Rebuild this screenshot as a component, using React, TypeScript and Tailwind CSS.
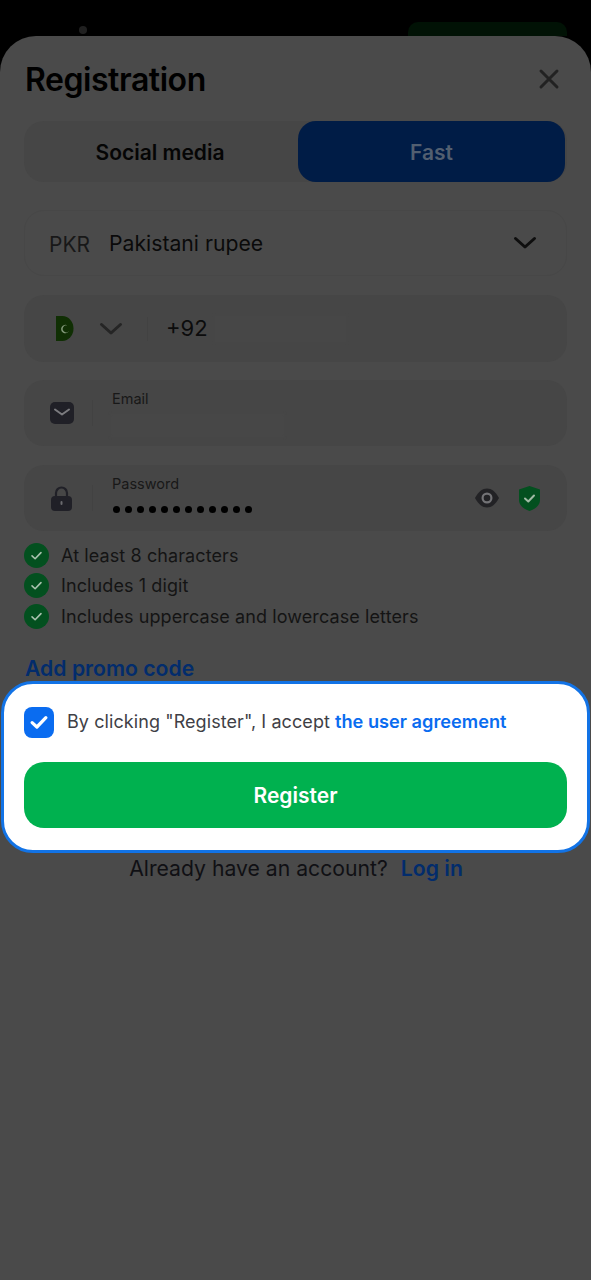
import React from "react";

const Check = ({ s = 12, w = 2, c = "#a9c2ae" }: { s?: number; w?: number; c?: string }) => (
  <svg width={s} height={s} viewBox="0 0 16 16" fill="none">
    <path d="M2.5 8.5 6.3 12 13.5 4.5" stroke={c} strokeWidth={w} strokeLinecap="round" strokeLinejoin="round" />
  </svg>
);

const Chevron = ({ c = "#2e2e2e" }: { c?: string }) => (
  <svg width="24" height="14" viewBox="0 0 24 14" fill="none">
    <path d="M2.5 2.5 12 11 21.5 2.5" stroke={c} strokeWidth="3" strokeLinecap="round" strokeLinejoin="round" />
  </svg>
);

const Rule = ({ text }: { text: string }) => (
  <div className="flex h-[30.5px] items-center gap-[12px]">
    <span className="flex h-[25px] w-[25px] items-center justify-center rounded-full bg-[#03501f]">
      <Check s={13} w={2} />
    </span>
    <span className="text-[18px] text-[#141414] tracking-[0.1px]">{text}</span>
  </div>
);

export default function App() {
  return (
    <div className="relative h-[1280px] w-[591px] overflow-hidden bg-[#4a4a4a] font-['Inter',sans-serif]">
      <div className="relative h-[36px] bg-black">
        <span className="absolute left-[79px] top-[26px] h-[8px] w-[8px] rounded-full bg-[#202020]" />
        <span className="absolute left-[408px] top-[22px] h-[20px] w-[159px] rounded-t-[10px] bg-[#011205]" />
      </div>
      <div className="relative">
        <div className="absolute left-0 top-0 h-[36px] w-[36px] bg-black" />
        <div className="absolute right-0 top-0 h-[36px] w-[36px] bg-black" />
        <div className="relative rounded-t-[36px] bg-[#4a4a4a]">
          <div className="flex h-[85px] items-center justify-between pl-[25px] pr-[30px] pt-[3px]">
            <h1 className="text-[32px] font-semibold leading-none tracking-[-0.45px] text-[#000000]">Registration</h1>
            <svg width="24" height="24" viewBox="0 0 24 24" fill="none" className="mb-[3px]">
              <path d="M4 4 20 20M20 4 4 20" stroke="#222222" strokeWidth="3" strokeLinecap="round" />
            </svg>
          </div>

          <div className="mx-[24px] flex h-[61px] rounded-[20px] bg-[#464646]">
            <div className="flex w-[272px] items-center justify-center pt-[3px] text-[21px] font-semibold text-[#050505]">Social media</div>
            <div className="ml-[2px] flex w-[267px] items-center justify-center rounded-[18px] bg-[#001c46] pt-[3px] text-[21px] font-semibold text-[#525f70]">Fast</div>
          </div>

          <div className="mx-[24px] mt-[28px] flex h-[66px] items-center rounded-[20px] border border-[#474747] pl-[24px] pr-[29px]">
            <span className="pt-[3px] text-[21px] text-[#181818]">PKR</span>
            <span className="ml-[19px] flex-1 pt-[2px] text-[21.2px] text-[#0a0a0a]">Pakistani rupee</span>
            <Chevron c="#0e0e0e" />
          </div>

          <div className="mx-[24px] mt-[19px] flex h-[67px] items-center rounded-[20px] bg-[#464646] pl-[32px]">
            <svg width="18" height="25" viewBox="0 0 18 25">
              <path d="M0 0H6.5A11 12.5 0 0 1 6.5 25H0Z" fill="#102f04" />
              <path d="M11.5 9.5A4.2 4.2 0 1 0 13 15A3.5 3.5 0 1 1 11.5 9.5Z" fill="#7f9676" />
            </svg>
            <span className="ml-[25px]"><Chevron c="#252525" /></span>
            <span className="ml-[24px] h-[24px] w-px bg-[#424242]" />
            <span className="ml-[18px] text-[22px] text-[#0c0c0c]">+92</span>
            <span className="ml-[6px] h-[28px] w-[133px] bg-[#474747] blur-[1px]" />
          </div>

          <div className="mx-[24px] mt-[18px] flex h-[66px] items-center rounded-[20px] bg-[#464646] pl-[26px]">
            <svg width="24" height="22" viewBox="0 0 24 22" fill="none">
              <rect width="24" height="22" rx="5" fill="#202027" />
              <path d="M5 7.5 12 12.5 19 7.5" stroke="#7a7a7e" strokeWidth="2" strokeLinecap="round" strokeLinejoin="round" />
            </svg>
            <span className="ml-[18px] h-[26px] w-px bg-[#424242]" />
            <div className="ml-[19px] self-start pt-[10px]">
              <div className="text-[14.5px] leading-[18px] text-[#181818]">Email</div>
              <div className="-ml-[2px] mt-[5px] h-[25px] w-[175px] rounded-[3px] bg-[#474747] blur-[1px]" />
            </div>
          </div>

          <div className="mx-[24px] mt-[19px] flex h-[66px] items-center rounded-[20px] bg-[#464646] pl-[27px] pr-[27px]">
            <svg width="21" height="25" viewBox="0 0 21 25" fill="none">
              <path d="M5 11V7a5.5 5.5 0 0 1 11 0v4" stroke="#202027" strokeWidth="2.2" />
              <rect y="10" width="21" height="15" rx="4" fill="#202027" />
              <rect x="9.5" y="15" width="2" height="4" rx="1" fill="#6a6a6e" />
            </svg>
            <span className="ml-[20px] h-[26px] w-px bg-[#424242]" />
            <div className="ml-[19px] flex-1 self-start pt-[10px]">
              <div className="text-[14.5px] leading-[18px] text-[#181818]">Password</div>
              <div className="ml-[1px] mt-[13px] flex gap-[5px]">
                {Array.from({ length: 12 }).map((_, i) => (
                  <span key={i} className="h-[7px] w-[7px] rounded-full bg-[#000000]" />
                ))}
              </div>
            </div>
            <svg width="24" height="20" viewBox="0 0 24 20" fill="none">
              <path d="M0 10C3.5 3.5 7.5 0.5 12 0.5S20.5 3.5 24 10C20.5 16.5 16.5 19.5 12 19.5S3.5 16.5 0 10Z" fill="#222225" />
              <circle cx="12" cy="10" r="4.4" stroke="#737376" strokeWidth="2.2" />
            </svg>
            <svg width="21" height="25" viewBox="0 0 21 25" className="ml-[20px]">
              <path d="M10.5 0 21 3.5V14C21 19.5 15.500 23.500 10.500 25 5.500 23.500 0 19.500 0 14V3.500Z" fill="#03501f" />
              <path d="M6 12.500 9.300 15.500 15 9.500" fill="none" stroke="#a0baa5" strokeWidth="2" strokeLinecap="round" strokeLinejoin="round" />
            </svg>
          </div>

          <div className="mx-[24px] mt-[9px]">
            <Rule text="At least 8 characters" />
            <Rule text="Includes 1 digit" />
            <Rule text="Includes uppercase and lowercase letters" />
          </div>

          <div className="ml-[25px] mt-[23px] text-[21.2px] font-semibold leading-[26px] text-[#022c6c]">Add promo code</div>

          <div className="mx-px h-[172px] rounded-[32px] border-[3px] border-[#1273e6] bg-white px-[20px] pt-[23px]">
            <div className="flex items-center">
              <span className="flex h-[31px] w-[30px] items-center justify-center rounded-[8px] bg-[#0a6cf0]">
                <Check s={20} w={2.6} c="#ffffff" />
              </span>
              <span className="ml-[13px] pb-[2px] text-[18px] tracking-[0.08px] text-[#3f3f46]">By clicking "Register", I accept</span>
              <span className="ml-[5px] pb-[1px] text-[18.2px] font-semibold text-[#0a6cf0]">the user agreement</span>
            </div>
            <div className="mt-[24px] flex h-[66px] items-center justify-center rounded-[20px] bg-[#00b14f] pt-[2px] text-[21px] font-semibold text-white">Register</div>
          </div>

          <div className="mt-[1px] flex h-[30px] items-center justify-center pl-[1px] text-[21.2px] text-[#101014]">
            <span>Already have an account?</span>
            <span className="ml-[13px] font-semibold text-[#022c6c]">Log in</span>
          </div>
        </div>
      </div>
    </div>
  );
}
